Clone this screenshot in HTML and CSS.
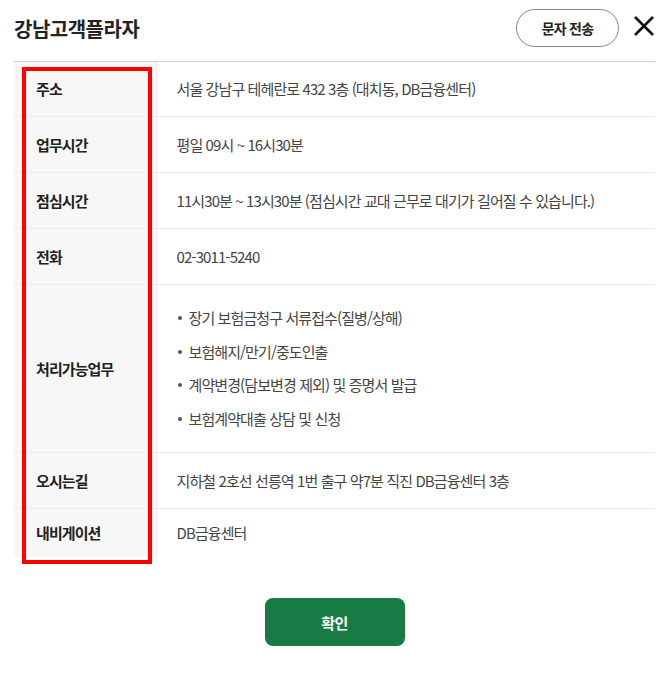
FILE: index.html
```html
<!DOCTYPE html>
<html lang="ko">
<head>
<meta charset="utf-8">
<title>강남고객플라자</title>
<link rel="stylesheet" href="styles.css">
</head>
<body>
<div class="popup">
  <header class="popup-head">
    <h1 class="popup-title">강남고객플라자</h1>
    <div class="head-actions">
      <button class="sms-btn" type="button">문자 전송</button>
      <button class="close-btn" type="button" aria-label="닫기">
        <svg width="22" height="22" viewBox="0 0 22 22"><path d="M2 2 L20 20 M20 2 L2 20" stroke="#111" stroke-width="2.6" fill="none"/></svg>
      </button>
    </div>
  </header>
  <div class="table-wrap">
    <table class="info-table">
      <tbody>
        <tr class="row row-first"><th>주소</th><td>서울 강남구 테헤란로 432 3층 (대치동, DB금융센터)</td></tr>
        <tr class="row"><th>업무시간</th><td>평일 09시 ~ 16시30분</td></tr>
        <tr class="row"><th>점심시간</th><td>11시30분 ~ 13시30분 (점심시간 교대 근무로 대기가 길어질 수 있습니다.)</td></tr>
        <tr class="row"><th>전화</th><td>02-3011-5240</td></tr>
        <tr class="row row-list"><th>처리가능업무</th><td>
          <ul class="task-list">
            <li>장기 보험금청구 서류접수(질병/상해)</li>
            <li>보험해지/만기/중도인출</li>
            <li>계약변경(담보변경 제외) 및 증명서 발급</li>
            <li>보험계약대출 상담 및 신청</li>
          </ul>
        </td></tr>
        <tr class="row"><th>오시는길</th><td>지하철 2호선 선릉역 1번 출구 약7분 직진 DB금융센터 3층</td></tr>
        <tr class="row row-last"><th>내비게이션</th><td>DB금융센터</td></tr>
      </tbody>
    </table>
    <div class="highlight-box"></div>
  </div>
  <div class="foot">
    <button class="confirm-btn" type="button">확인</button>
  </div>
</div>
</body>
</html>
```
FILE: styles.css
```css
* { box-sizing: border-box; }
html, body { margin: 0; padding: 0; background: #fff; }
body {
  font-family: "Noto Sans CJK KR", "Noto Sans", sans-serif;
  color: #333;
}
.popup { padding: 0 14px; }
.popup-head {
  height: 62px;
  border-bottom: 1px solid #cfcfcf;
  display: flex;
  align-items: center;
  justify-content: space-between;
}
.popup-title {
  margin: 0;
  font-size: 20px;
  font-weight: 700;
  letter-spacing: -0.5px;
  color: #222;
  line-height: 1;
  margin-top: -4px;
}
.head-actions { display: flex; align-items: center; gap: 14px; }
.sms-btn {
  width: 103px;
  height: 38px;
  border: 1px solid #8a8a8a;
  border-radius: 19px;
  background: #fff;
  font-family: inherit;
  font-size: 14px;
  font-weight: 700;
  letter-spacing: -0.8px;
  color: #222;
  padding: 0;
  margin-top: -6px;
}
.close-btn {
  border: 0;
  background: none;
  padding: 0;
  width: 22px;
  height: 22px;
  margin-top: -9px;
  display: flex;
}
.table-wrap { position: relative; }
.info-table {
  width: 100%;
  border-collapse: collapse;
}
.info-table th, .info-table td {
  height: 56px;
  border-bottom: 1px solid #ececec;
  vertical-align: middle;
  padding: 0;
}
.row-first th, .row-first td { height: 54px; }
.info-table th {
  width: 142px;
  background: #f7f7f7;
  border-right: 1px solid #ececec;
  text-align: left;
  padding-left: 22px;
  font-size: 15px;
  font-weight: 700;
  letter-spacing: -0.9px;
  color: #222;
}
.info-table td {
  padding-left: 20px;
  font-size: 15px;
  font-weight: 400;
  letter-spacing: -0.9px;
  color: #444;
}
.row-list th, .row-list td { height: 168px; }
.row-last th, .row-last td { border-bottom: 0; height: 49px; }
.task-list {
  list-style: none;
  margin: 0;
  padding: 16px 0;
}
.task-list li {
  line-height: 33.5px;
  position: relative;
  padding-left: 12px;
}
.task-list li::before {
  content: "";
  position: absolute;
  left: 1px;
  top: 15px;
  width: 4px;
  height: 4px;
  border-radius: 50%;
  background: #555;
}
.highlight-box {
  position: absolute;
  left: 8px;
  top: 5px;
  width: 130px;
  height: 497px;
  border: 4px solid #ff0000;
  pointer-events: none;
}
.foot {
  display: flex;
  justify-content: center;
  padding-top: 41px;
}
.confirm-btn {
  width: 140px;
  height: 48px;
  border: 0;
  border-radius: 8px;
  background: #187a45;
  color: #fff;
  font-family: inherit;
  font-size: 15px;
  font-weight: 700;
  letter-spacing: -0.5px;
}
```
